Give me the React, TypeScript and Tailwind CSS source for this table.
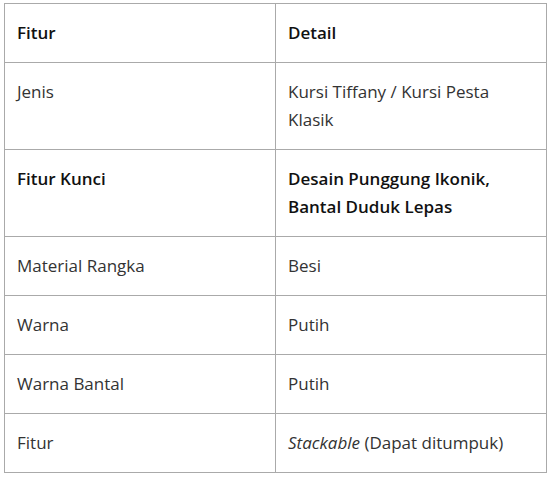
const rows: { label: string; detail: React.ReactNode; bold?: boolean }[] = [
  { label: 'Jenis', detail: 'Kursi Tiffany / Kursi Pesta Klasik' },
  { label: 'Fitur Kunci', detail: 'Desain Punggung Ikonik, Bantal Duduk Lepas', bold: true },
  { label: 'Material Rangka', detail: 'Besi' },
  { label: 'Warna', detail: 'Putih' },
  { label: 'Warna Bantal', detail: 'Putih' },
  {
    label: 'Fitur',
    detail: (
      <>
        <em>Stackable</em> (Dapat ditumpuk)
      </>
    ),
  },
];

export default function App() {
  return (
    <div className="min-h-screen bg-white pl-[4px] pt-[3px] font-['Open_Sans',sans-serif] text-[17px] leading-[28px] text-[#333]">
      <table className="w-[543px] table-fixed border-collapse border border-[#aaa]">
        <thead>
          <tr>
            <th className="border border-[#aaa] px-3 py-[15px] text-left font-semibold text-[#111]">Fitur</th>
            <th className="border border-[#aaa] px-3 py-[15px] text-left font-semibold text-[#111]">Detail</th>
          </tr>
        </thead>
        <tbody>
          {rows.map((r) => (
            <tr key={r.label}>
              <td className={`border border-[#aaa] px-3 py-[15px] align-top ${r.bold ? 'font-semibold text-[#111]' : ''}`}>
                {r.label}
              </td>
              <td className={`border border-[#aaa] px-3 py-[15px] align-top ${r.bold ? 'font-semibold text-[#111]' : ''}`}>
                {r.detail}
              </td>
            </tr>
          ))}
        </tbody>
      </table>
    </div>
  );
}
